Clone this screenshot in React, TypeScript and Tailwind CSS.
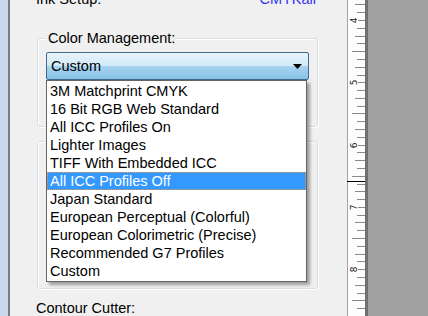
import * as React from "react";

const profiles = [
  "3M Matchprint CMYK",
  "16 Bit RGB Web Standard",
  "All ICC Profiles On",
  "Lighter Images",
  "TIFF With Embedded ICC",
  "All ICC Profiles Off",
  "Japan Standard",
  "European Perceptual (Colorful)",
  "European Colorimetric (Precise)",
  "Recommended G7 Profiles",
  "Custom",
];

const selected = "All ICC Profiles Off";

function Ruler() {
  const inch = 62.3;
  const ticks: { y: number; x1: number; label?: number }[] = [];
  for (let i = -24; i <= 40; i++) {
    const y = Math.round(20 + (i * inch) / 8) + 0.5;
    if (y < -2 || y > 318) continue;
    if (i % 8 === 0) ticks.push({ y, x1: 11, label: 4 + i / 8 });
    else if (i % 4 === 0) ticks.push({ y, x1: 5 });
    else if (i % 2 === 0) ticks.push({ y, x1: 8 });
    else ticks.push({ y, x1: 10 });
  }

  return (
    <svg width="21" height="316" className="shrink-0 bg-[#fdfdfd]">
      <line x1="0.5" y1="0" x2="0.5" y2="316" stroke="#a3a3a3" />
      <rect x="18" y="0" width="3" height="316" fill="#6f6f6f" />
      {ticks.map((t) => (
        <g key={t.y}>
          <line x1={t.x1} y1={t.y} x2="18" y2={t.y} stroke="#8a8a8a" />
          {t.label !== undefined && (
            <text
              transform={`translate(10 ${t.y}) rotate(-90)`}
              textAnchor="middle"
              fontSize="9"
              fontFamily="'DejaVu Sans', sans-serif"
              fill="#202020"
            >
              {t.label}
            </text>
          )}
        </g>
      ))}
      <line x1="0" y1="181.5" x2="18" y2="181.5" stroke="#000" />
    </svg>
  );
}

export default function App() {
  return (
    <div className="flex h-[316px] w-[428px] overflow-hidden bg-[#f0f0f0] font-['Liberation_Sans',Arial,sans-serif] text-[14.5px] leading-[18px] text-black">
      <div className="w-[8px] shrink-0 bg-[#c9d9ed]" />
      <div className="w-[2px] shrink-0 bg-[#7c7c7c]" />

      <div className="relative w-[337px] shrink-0 pl-[26px]">
        <div className="-mt-[10px] flex h-[18px] justify-between pr-[31px]">
          <span>Ink Setup:</span>
          <span className="text-[#3434f0]">CMYKall</span>
        </div>

        {/* Color Management group */}
        <div className="relative ml-[1px] mt-[30px] h-[89px] w-[281px] rounded-[3px] border border-[#d5dfe5] shadow-[inset_1px_1px_0_#fff,1px_1px_0_#fff]">
          <span className="absolute -top-[10px] left-[8px] bg-[#f0f0f0] px-[2px]">
            Color Management:
          </span>
          <div className="mx-[8px] mt-[13px] flex h-[28px] items-center justify-between rounded-[2px] border border-[#3e6c90] bg-[linear-gradient(#e8f4fb,#d2e9f7_50%,#a9d4ef_50%,#86c2e6)] pl-[4px] pr-[6px]">
            <span>Custom</span>
            <svg width="9" height="5" viewBox="0 0 9 5">
              <polygon points="0,0 9,0 4.5,5" fill="#000" />
            </svg>
          </div>
        </div>

        {/* second group, mostly hidden under the open list */}
        <div className="ml-[1px] mt-[14px] h-[148px] w-[281px] rounded-[3px] border border-[#d5dfe5] shadow-[inset_1px_1px_0_#fff,1px_1px_0_#fff]" />

        <div className="mt-[10px]">Contour Cutter:</div>

        {/* open dropdown list */}
        <ul className="absolute left-[36px] top-[80px] w-[261px] border border-[#646464] bg-white py-[1px] shadow-[3px_3px_3px_rgba(0,0,0,0.35)]">
          {profiles.map((p) => (
            <li
              key={p}
              className={
                p === selected
                  ? "h-[18px] border border-dotted border-[#e39a50] bg-[#3399ff] pl-[2px] leading-[16px] text-white"
                  : "h-[18px] pl-[3px]"
              }
            >
              {p}
            </li>
          ))}
        </ul>
      </div>

      <Ruler />
      <div className="flex-1 bg-[#a0a0a0]" />
    </div>
  );
}
